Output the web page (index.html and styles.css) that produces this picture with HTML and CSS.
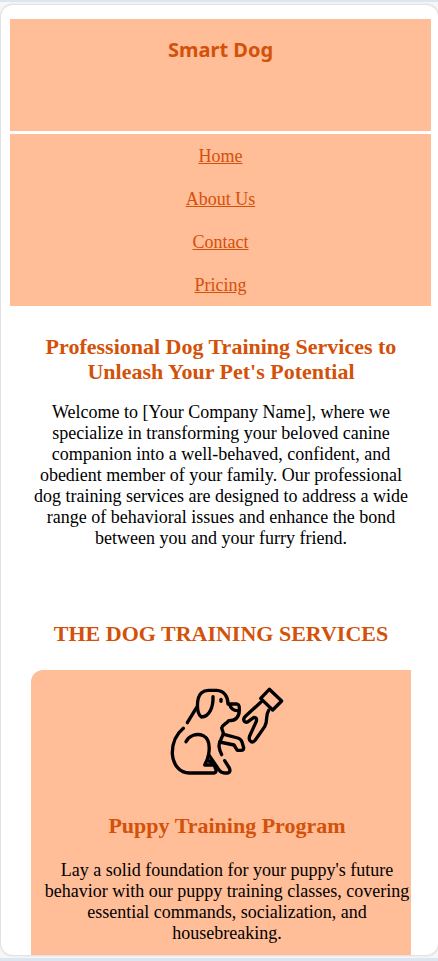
FILE: index.html
```html
<!DOCTYPE html>
<html lang="en">
<head>
<meta charset="utf-8">
<meta name="viewport" content="width=device-width, initial-scale=1">
<title>Smart Dog</title>
<link rel="stylesheet" href="styles.css">
</head>
<body>
<div class="frame">
  <header class="brand">Smart Dog</header>
  <nav class="menu">
    <a href="#home">Home</a>
    <a href="#about">About Us</a>
    <a href="#contact">Contact</a>
    <a href="#pricing">Pricing</a>
  </nav>
  <main class="content">
    <section class="intro">
      <h1>Professional Dog Training Services to Unleash Your Pet's Potential</h1>
      <p>Welcome to [Your Company Name], where we specialize in transforming your beloved canine companion into a well-behaved, confident, and obedient member of your family. Our professional dog training services are designed to address a wide range of behavioral issues and enhance the bond between you and your furry friend.</p>
    </section>
    <section class="services">
      <h2>THE DOG TRAINING SERVICES</h2>
      <div class="slider">
        <article class="card">
          <svg class="icon" viewBox="0 0 405 330" fill="none" stroke="#000" stroke-width="10" stroke-linecap="round" stroke-linejoin="round" aria-hidden="true">
            <path d="M82 143L110 97"/>
            <path d="M159 65C160 93 150 126 124 126C108 114 109 68 124 54Q133 46 145 46H170C192 47 204 65 204 87H231Q239 89 238 104C238 126 226 137 206 137C198 147 186 149 185 159L190 174C187 190 176 201 177 214Q179 229 185 239"/>
            <path d="M209 89Q214 107 232 107"/>
            <path d="M183 73V79"/>
            <path d="M70 160C44 182 36 207 37 237C39 270 60 294 88 294H162Q172 292 166 280L163 270H134Q143 254 146 237C151 207 146 191 130 182C110 173 87 182 78 200"/>
            <path d="M146 239L178 286Q184 294 193 294H204Q213 291 208 279L194 257M144 256L163 270"/>
            <path d="M192 178L233 189Q243 192 246 201L251 218Q251 226 243 226H232L222 210L179 201"/>
            <path d="M328 43L365 78L338 105L302 70Z"/>
            <path d="M303 81L257 123Q248 131 253 139Q259 145 268 137L282 127Q292 127 289 139L269 183Q265 195 273 200Q279 203 286 195L314 155Q320 144 320 128Q320 116 326 106"/>
          </svg>
          <h3>Puppy Training Program</h3>
          <p>Lay a solid foundation for your puppy's future behavior with our puppy training classes, covering essential commands, socialization, and housebreaking.</p>
        </article>
      </div>
    </section>
  </main>
</div>
</body>
</html>
```
FILE: styles.css
```css
* {
  box-sizing: border-box;
}

body {
  margin: 0;
  height: 100vh;
  padding: 3px 0 3px 1px;
  border-top: 2px solid #dde5f2;
  border-bottom: 3px solid #dde5f2;
  background: #f7f7f7;
  color: #000;
  font-family: "Liberation Serif", "Times New Roman", serif;
  font-size: 18px;
  line-height: 21px;
  text-align: center;
}

.frame {
  height: 100%;
  padding: 14px 7px 0 9px;
  border-radius: 12px;
  background: #fff;
  box-shadow: 0 0 3px #bbb;
  overflow: hidden;
}

.brand {
  height: 112px;
  margin-bottom: 3px;
  padding-top: 18px;
  background: #ffbd98;
  color: #d35108;
  font-family: "Noto Sans", "Open Sans", sans-serif;
  font-size: 20px;
  font-weight: 700;
  line-height: 26px;
}

.menu {
  display: flex;
  flex-direction: column;
  align-items: center;
  gap: 22px;
  padding: 12px 0 10px;
  background: #ffbd98;
}

.menu a {
  color: #d35108;
}

.content {
  padding: 0 20px 0 21px;
}

h1,
h2,
h3 {
  margin: 0;
  color: #d35108;
  font-size: 22px;
  line-height: 25px;
}

p {
  margin: 0;
}

.intro {
  padding: 28px 0 72px;
}

.intro p {
  margin-top: 18px;
}

.slider {
  display: flex;
  margin-top: 24px;
  overflow: hidden;
}

.card {
  flex: 0 0 calc(100% + 12px);
  padding: 5px 12px 30px;
  border-radius: 12px;
  background: #ffbd98;
}

.icon {
  display: block;
  width: 135px;
  height: 110px;
  margin: 0 auto 28px;
}

.card p {
  margin-top: 22px;
}
```
